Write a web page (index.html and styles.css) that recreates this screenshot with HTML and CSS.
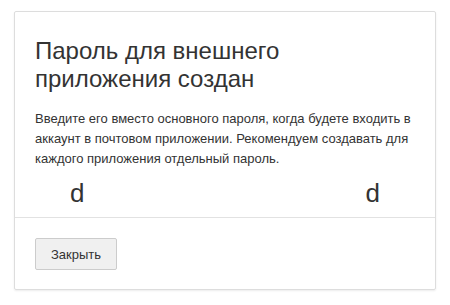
FILE: index.html
```html
<!DOCTYPE html>
<html>
<head>
  <meta charset="utf-8">
  <title>Пароль для внешнего приложения</title>
  <link rel="stylesheet" href="styles.css">
</head>
<body>
  <!-- Password created dialog -->
  <div class="dialog">
    <div class="dialog-body">
      <h2 class="dialog-title">Пароль для внешнего приложения создан</h2>
      <p class="dialog-text">
        Введите его вместо основного пароля, когда будете входить в
        аккаунт в почтовом приложении. Рекомендуем создавать для
        каждого приложения отдельный пароль.
      </p>
      <div class="password-row">
        <span>d</span>
        <span>d</span>
      </div>
    </div>
    <div class="dialog-footer">
      <button class="btn">Закрыть</button>
    </div>
  </div>
</body>
</html>
```

FILE: styles.css
```css
body {
  margin: 0;
  padding: 11px 14px;
  font-family: "Liberation Sans", Arial, sans-serif;
  color: #333;
  background: #fff;
}
.dialog {
  width: 422px;
  box-sizing: border-box;
  border: 1px solid #ddd;
  border-radius: 2px;
  box-shadow: 0 1px 2px rgba(0, 0, 0, 0.08);
}
.dialog-body {
  padding: 25px 20px 9px;
  border-bottom: 1px solid #e2e2e2;
}
.dialog-title {
  margin: 0 0 16px;
  font-size: 24px;
  line-height: 28px;
  font-weight: normal;
  color: #333;
  max-width: 300px;
}
.dialog-text {
  margin: 0 0 9px;
  font-size: 13px;
  line-height: 20px;
}
.password-row {
  display: flex;
  justify-content: space-between;
  padding: 0 35px 0 35px;
  font-size: 26px;
  line-height: 30px;
}
.dialog-footer {
  padding: 20px 20px 19px;
}
.btn {
  font-family: inherit;
  font-size: 13px;
  color: #333;
  background: #f0f0f0;
  border: 1px solid #ccc;
  border-radius: 2px;
  height: 32px;
  padding: 0 15px;
  cursor: pointer;
}
```
